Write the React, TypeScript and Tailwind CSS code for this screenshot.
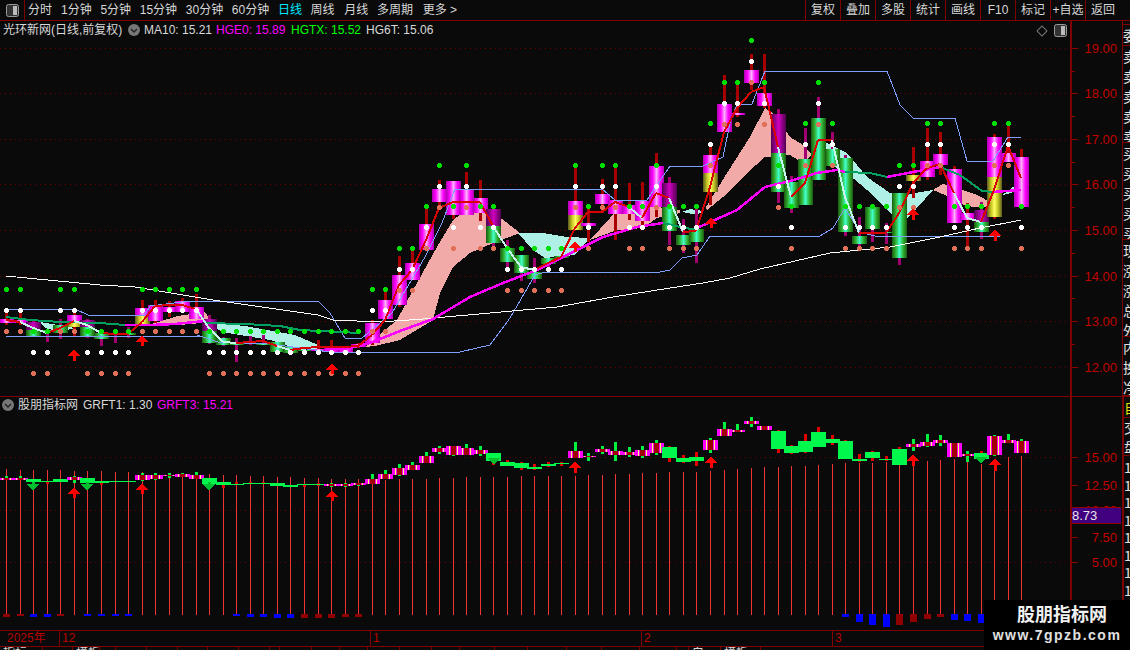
import React from "react";

const barX = (i: number) => Math.round(6.3 + 13.533 * i);

// [wickTop, bodyTop, bodyBottom, wickBottom, kind, split]
type Candle = [number, number, number, number, string, number?];
const candles: Candle[] = [
  [312, 319, 323, 325, "m"], [312, 320, 323, 325, "m"], [320, 322, 336, 337, "p", 330], [329, 330, 332, 342, "g"],
  [319, 325, 333, 339, "g"], [312, 315, 327, 337, "y", 322], [319, 320, 336, 338, "p", 327], [333, 333, 339, 346, "g"],
  [333, 333, 335, 343, "g"], [327, 333, 335, 338, "g"], [300, 308, 324, 325, "y", 316], [300, 305, 321, 323, "m"],
  [301, 307, 312, 317, "m"], [298, 301, 312, 312, "m"], [294, 307, 319, 319, "m"], [315, 319, 343, 344, "p", 331],
  [337, 338, 345, 346, "g"], [338, 343, 345, 362, "g"], [336, 343, 344, 345, "g"], [335, 343, 345, 345, "g"],
  [342, 342, 352, 353, "g"], [347, 347, 353, 354, "g"], [350, 350, 351, 352, "g"], [340, 349, 351, 355, "m"],
  [340, 348, 352, 350, "m"], [348, 348, 352, 352, "m"], [343, 344, 347, 348, "m"], [320, 323, 343, 345, "m"],
  [290, 300, 319, 319, "m"], [256, 275, 305, 307, "m"], [249, 263, 280, 280, "m"], [207, 224, 250, 250, "m"],
  [180, 189, 202, 208, "m"], [181, 181, 215, 219, "m"], [172, 189, 215, 215, "m"], [180, 198, 213, 221, "m"],
  [205, 209, 243, 251, "p", 226], [240, 248, 262, 267, "g"], [255, 255, 273, 281, "g"], [258, 272, 279, 283, "g"],
  [258, 258, 264, 269, "g"], [256, 256, 258, 258, "g"], [163, 201, 230, 230, "y", 215], [206, 223, 226, 242, "m"],
  [179, 194, 204, 213, "m"], [163, 200, 214, 240, "m"], [183, 205, 214, 220, "m"], [182, 201, 221, 227, "m"],
  [153, 166, 207, 217, "m"], [177, 183, 231, 245, "p", 207], [219, 235, 245, 253, "g"], [208, 229, 242, 263, "g"],
  [145, 155, 192, 205, "y", 173], [75, 104, 132, 132, "m"], [85, 113, 115, 117, "m"], [54, 70, 83, 90, "m"],
  [54, 93, 106, 108, "m"], [109, 114, 192, 203, "p", 153], [176, 182, 208, 213, "g"], [128, 159, 205, 205, "g"],
  [97, 118, 180, 180, "g"], [132, 149, 166, 166, "g"], [155, 158, 232, 236, "g"], [217, 236, 244, 251, "g"],
  [207, 207, 229, 242, "g"], [223, 232, 233, 244, "g"], [193, 193, 258, 265, "g"], [147, 175, 181, 198, "y", 175],
  [128, 161, 177, 180, "m"], [132, 154, 165, 175, "m"], [166, 169, 223, 223, "m"], [203, 213, 220, 248, "m"],
  [202, 210, 232, 239, "p", 222], [134, 137, 217, 219, "y", 177], [126, 153, 162, 162, "m"], [149, 157, 207, 207, "m"],
];

// first dot row for each bar: green, then white 21 below, orange 42 below
const dotRows = [
  289, 289, 331, 331, 289, 289, 331, 331, 331, 331, 289, 289, 289, 289, 289, 331, 331, 331, 331, 331, 331, 331, 331, 331, 331, 331, 331,
  289, 289, 248, 248, 206, 165, 206, 165, 206, 206, 248, 248, 248, 248, 248, 165, 206, 165, 165, 206, 206, 165, 206, 206, 206,
  123, 82, 82, 40, 82, 165, 206, 123, 82, 123, 206, 206, 206, 206, 165, 165, 123, 123, 206, 206, 206, 123, 123, 206,
];

const redLine: [number, string][] = [
  [320, "r"], [322, "r"], [328, "p"], [333, "p"], [328, "r"], [321, "r"], [325, "p"], [333, "p"], [334, "r"], [334, "r"], [322, "r"], [306, "r"], [305, "r"], [305, "r"], [309, "r"],
  [328, "p"], [342, "p"], [343, "p"], [342, "r"], [341, "r"], [346, "r"], [350, "p"], [348, "r"], [347, "r"], [347, "r"], [347, "r"], [346, "r"], [335, "r"], [320, "r"], [285, "r"],
  [270, "r"], [240, "r"], [208, "r"], [202, "r"], [202, "r"], [202, "r"], [226, "r"], [248, "p"], [267, "p"], [270, "p"], [263, "r"], [257, "r"], [228, "r"], [212, "r"], [212, "r"],
  [202, "r"], [207, "r"], [218, "p"], [193, "r"], [198, "r"], [232, "p"], [231, "r"], [187, "r"], [132, "r"], [108, "r"], [92, "r"], [87, "r"], [147, "r"], [197, "p"], [183, "r"],
  [140, "r"], [140, "r"], [197, "p"], [233, "p"], [233, "r"], [233, "r"], [213, "r"], [183, "r"], [168, "r"], [164, "r"], [193, "r"], [218, "p"], [222, "p"], [190, "r"], [146, "r"], [178, "r"],
];

const upperBlue = "6,309 75,309 88,315 145,315 150,306 190,301 318,301 330,313 345,338 362,338 392,313 425,257 442,223 455,189 602,189 615,200 647,200 670,166 703,166 723,157 730,123 737,104 752,104 765,71 887,71 900,105 913,118 955,118 967,161 993,161 1008,137 1021,137";
const lowerBlue = "6,337 200,336 218,342 270,344 330,352 460,352 490,345 510,318 535,275 545,272 660,272 670,270 682,258 697,255 710,236 820,236 833,228 845,208 860,232 875,236 1000,236";
const whiteLine = "6,276 100,285 135,287 213,300 318,315 333,320 380,322 423,319 557,307 613,297 670,288 703,283 730,278 760,269 830,253 890,247 940,237 980,228 1021,220";

const maSegments: [string, string][] = [
  ["#00a060", "6,317 30,320 60,322 100,323 125,325"],
  ["#ff00ff", "125,325 150,325 175,324 205,321"],
  ["#00a060", "205,323 245,324 280,326 300,330 360,333"],
  ["#ff00ff", "325,350 350,348 370,343 400,331 433,319 470,297 503,283 537,270 563,257 603,237 637,227 663,223"],
  ["#00a060", "663,223 680,227 697,230"],
  ["#ff00ff", "697,228 737,210 765,187 790,181 817,173 837,170 845,172"],
  ["#00a060", "845,172 870,173 887,177"],
  ["#ff00ff", "887,177 913,172 940,167"],
  ["#00a060", "940,167 960,175 982,191 993,192"],
  ["#ff00ff", "993,192 1021,190"],
];

const pinkBands = [
  "148,325 178,316 205,312 212,322 180,325",
  "365,347 397,320 413,290 437,247 453,220 470,207 497,215 520,233 493,243 470,253 453,267 440,293 433,320 400,340 375,346",
  "590,240 620,207 657,207 680,210 680,213 657,218 643,228 617,230",
  "706,207 727,173 750,137 765,108 773,113 790,137 803,145 812,155 803,163 790,155 765,157 747,173 723,197 707,210",
  "933,190 943,184 957,188 977,195 992,203 987,207 973,207 957,203 950,197",
];
const aquaBands = [
  "40,322 75,328 60,332 45,328",
  "208,322 245,326 295,335 325,348 300,350 270,340 222,332",
  "518,233 543,233 567,237 590,238 575,255 545,258 533,250",
  "682,212 690,209 703,211 697,215",
  "825,142 847,153 867,177 890,193 903,195 933,190 908,218 897,220 887,210 867,190 847,173 827,163",
  "992,203 1013,187 1021,186 1021,190 1000,196",
];

const mainArrows: [number, number, number][] = [
  [74, 349, 361], [142, 335, 346], [332, 363, 374], [575, 241, 252], [711, 217, 228], [913, 208, 220], [995, 229, 241],
];

// sub chart, y values read off at 3x from y=395: [bodyTop, bodyBottom, wickTop, wickBottom, up?]
type SubBar = [number, number, number, number, number];
const subBars: SubBar[] = [
  [249, 255, 243, 256, 1], [250, 255, 243, 256, 1], [252, 261, 252, 261, 0], [258, 261, 258, 267, 0], [252, 261, 252, 261, 0], [246, 255, 243, 265, 1], [249, 264, 249, 264, 0], [258, 264, 258, 270, 0],
  [258, 262, 258, 262, 0], [258, 261, 258, 261, 0], [240, 255, 233, 257, 1], [240, 252, 234, 255, 1], [240, 243, 235, 249, 1], [238, 245, 233, 246, 1], [240, 252, 232, 253, 1], [249, 267, 249, 267, 0],
  [261, 270, 261, 279, 0], [266, 269, 261, 269, 0], [264, 267, 261, 267, 0], [264, 267, 261, 267, 0], [264, 273, 264, 273, 0], [270, 276, 270, 276, 0], [267, 270, 267, 276, 0], [267, 270, 263, 273, 0],
  [267, 273, 263, 276, 1], [267, 273, 263, 276, 1], [264, 270, 263, 273, 1], [252, 267, 237, 267, 1], [237, 252, 225, 252, 1], [219, 240, 207, 243, 1], [210, 225, 201, 225, 1], [183, 204, 171, 204, 1],
  [159, 171, 153, 177, 1], [153, 180, 153, 183, 1], [159, 180, 147, 180, 1], [165, 177, 153, 183, 1], [174, 198, 174, 210, 0], [201, 213, 195, 213, 0], [204, 219, 201, 225, 0], [216, 222, 207, 225, 0],
  [207, 213, 201, 216, 0], [204, 207, 201, 213, 0], [168, 189, 141, 189, 1], [183, 186, 174, 198, 1], [162, 171, 153, 177, 1], [168, 180, 141, 198, 1], [171, 180, 156, 186, 1], [165, 183, 153, 189, 1],
  [144, 174, 135, 180, 1], [156, 189, 153, 201, 0], [189, 201, 180, 204, 0], [186, 198, 171, 213, 0], [135, 165, 129, 174, 1], [102, 123, 81, 123, 1], [105, 111, 87, 111, 1], [78, 87, 66, 96, 1],
  [93, 105, 93, 105, 1], [108, 162, 105, 174, 0], [153, 174, 150, 177, 0], [138, 171, 117, 174, 0], [111, 156, 96, 156, 0], [132, 144, 120, 150, 0], [138, 192, 135, 192, 0], [192, 198, 177, 201, 0],
  [171, 189, 168, 198, 0], [192, 195, 183, 198, 0], [162, 210, 156, 210, 0], [147, 156, 132, 168, 1], [141, 153, 117, 156, 1], [135, 144, 120, 153, 1], [144, 186, 144, 186, 1], [177, 183, 168, 201, 1],
  [174, 192, 168, 192, 0], [123, 180, 120, 183, 1], [135, 144, 117, 144, 1], [138, 174, 132, 174, 1],
];
const lineTops = [
  222, 225, 225, 225, 225, 228, 228, 228, 231, 231, 231, 235, 238, 240, 237, 238, 240, 241, 243, 243, 246, 246, 250, 250, 252, 252, 252, 252,
  255, 252, 252, 252, 249, 249, 246, 246, 246, 246, 243, 243, 243, 243, 243, 240, 240, 237, 237, 234, 234, 231, 231, 231, 228, 225, 222, 219,
  216, 216, 213, 213, 210, 207, 204, 204, 204, 201, 210, 210, 198, 195, 192, 201, 207, 210, 186, 183,
];
// [bar, depth in px, colour]
const footBars: [number, number, string][] = [
  [0, 3, "#900000"], [1, 2, "#900000"], [2, 3, "#0000ff"], [3, 3, "#0000ff"], [4, 2, "#900000"], [6, 2, "#0000ff"], [7, 2, "#0000ff"], [8, 2, "#0000ff"], [9, 2, "#0000ff"],
  [17, 2, "#0000ff"], [18, 3, "#0000ff"], [19, 3, "#0000ff"], [20, 4, "#0000ff"], [21, 4, "#0000ff"], [22, 4, "#900000"], [23, 4, "#900000"], [24, 4, "#900000"], [25, 3, "#900000"], [26, 3, "#900000"],
  [62, 3, "#0000ff"], [63, 8, "#0000ff"], [64, 11, "#0000ff"], [65, 13, "#0000ff"], [66, 11, "#900000"], [67, 8, "#900000"], [68, 5, "#900000"], [69, 3, "#900000"], [70, 6, "#0000ff"], [71, 7, "#0000ff"], [72, 9, "#0000ff"],
];
const subUp: [number, number, number][] = [
  [74, 487, 498], [142, 483, 494], [332, 490, 501], [575, 461, 473], [711, 456, 468], [913, 454, 466], [995, 458, 471],
];
const subDown: [number, number, number][] = [
  [33, 482, 491], [87, 482, 491], [209, 482, 491], [494, 461, 465], [981, 459, 464],
];

const zy = (z: number) => Math.round(395 + z / 3);

const UpArrow = ({ x, top, bottom }: { x: number; top: number; bottom: number }) => (
  <g fill="#ff0000">
    <polygon points={`${x - 6},${top + 7} ${x},${top} ${x + 6},${top + 7}`} />
    <rect x={x - 1} y={top + 6} width={3} height={bottom - top - 6} />
  </g>
);

// 5px blob with the corners knocked off
const Dot = ({ x, y, fill }: { x: number; y: number; fill: string }) => (
  <g fill={fill}>
    <rect x={x - 2} y={y - 1} width={5} height={3} />
    <rect x={x - 1} y={y - 2} width={3} height={5} />
  </g>
);

const MainChart = () => {
  const grid = [48, 93, 139, 184, 230, 276, 321, 367];
  return (
    <svg width={1070} height={375} viewBox="0 21 1070 375" className="block" shapeRendering="crispEdges">
      <defs>
        <linearGradient id="mag">
          <stop offset="0" stopColor="#b000b0" />
          <stop offset="0.25" stopColor="#ff00ff" />
          <stop offset="0.5" stopColor="#ffb0ff" />
          <stop offset="0.75" stopColor="#ff00ff" />
          <stop offset="1" stopColor="#b000b0" />
        </linearGradient>
        <linearGradient id="grn">
          <stop offset="0" stopColor="#1a5a10" />
          <stop offset="0.25" stopColor="#30b030" />
          <stop offset="0.5" stopColor="#40ffc8" />
          <stop offset="0.75" stopColor="#30b030" />
          <stop offset="1" stopColor="#1a5a10" />
        </linearGradient>
        <linearGradient id="yel">
          <stop offset="0" stopColor="#5a5a20" />
          <stop offset="0.25" stopColor="#c0c020" />
          <stop offset="0.5" stopColor="#ffff60" />
          <stop offset="0.75" stopColor="#c0c020" />
          <stop offset="1" stopColor="#5a5a20" />
        </linearGradient>
        <linearGradient id="pur">
          <stop offset="0" stopColor="#500050" />
          <stop offset="0.5" stopColor="#d000c0" />
          <stop offset="1" stopColor="#500050" />
        </linearGradient>
      </defs>
      {grid.map((y) => (
        <line key={y} x1={0} x2={1070} y1={y} y2={y} stroke="#700000" strokeDasharray="1 4" />
      ))}
      {pinkBands.map((p) => <polygon key={p} points={p} fill="#f2aaa8" />)}
      {aquaBands.map((p) => <polygon key={p} points={p} fill="#aeefe6" />)}
      {candles.map(([wt, bt, bb, wb, kind, split], i) => {
        const x = barX(i);
        const green = kind === "g" || kind === "p";
        const s = split ?? bt;
        const top = kind === "y" ? "url(#mag)" : kind === "p" ? "url(#pur)" : "";
        const bottom = kind === "m" ? "url(#mag)" : kind === "y" ? "url(#yel)" : "url(#grn)";
        return (
          <g key={i}>
            <rect x={x - 1} y={wt} width={3} height={wb - wt} fill={green ? "#a00070" : "#a80000"} />
            {s > bt && <rect x={x - 7} y={bt} width={15} height={s - bt} fill={top} />}
            <rect x={x - 7} y={s} width={15} height={Math.max(bb - s, 1)} fill={bottom} />
          </g>
        );
      })}
      <polyline points={upperBlue} fill="none" stroke="#7f9fff" />
      <polyline points={lowerBlue} fill="none" stroke="#7f9fff" />
      <polyline points={whiteLine} fill="none" stroke="#ffffff" />
      {maSegments.map(([c, p]) => (
        <polyline key={p} points={p} fill="none" stroke={c} strokeWidth={c === "#ff00ff" ? 2.5 : 2} />
      ))}
      {redLine.slice(1).map(([y, c], i) => (
        <line key={i} x1={barX(i)} y1={redLine[i][0]} x2={barX(i + 1)} y2={y} stroke={c === "r" ? "#d80000" : "#c8f4ee"} strokeWidth={2} />
      ))}
      {dotRows.map((y, i) => (
        <g key={i}>
          <Dot x={barX(i)} y={y} fill="#00e000" />
          <Dot x={barX(i)} y={y + 21} fill="#ffffff" />
          <Dot x={barX(i)} y={y + 42} fill="#e07058" />
        </g>
      ))}
      {mainArrows.map(([x, t, b]) => <UpArrow key={x} x={x} top={t} bottom={b} />)}
    </svg>
  );
};

const SubChart = () => (
  <svg width={1070} height={233} viewBox="0 397 1070 233" className="block" shapeRendering="crispEdges">
    <defs>
      <linearGradient id="stripe">
        <stop offset="0" stopColor="#ff00ff" />
        <stop offset="0.2" stopColor="#ff00ff" />
        <stop offset="0.2" stopColor="#ffff70" />
        <stop offset="0.27" stopColor="#ffff70" />
        <stop offset="0.27" stopColor="#ff00ff" />
        <stop offset="0.34" stopColor="#ff00ff" />
        <stop offset="0.34" stopColor="#a00000" />
        <stop offset="0.66" stopColor="#a00000" />
        <stop offset="0.66" stopColor="#ff00ff" />
        <stop offset="0.73" stopColor="#ff00ff" />
        <stop offset="0.73" stopColor="#ffff70" />
        <stop offset="0.8" stopColor="#ffff70" />
        <stop offset="0.8" stopColor="#ff00ff" />
        <stop offset="1" stopColor="#ff00ff" />
      </linearGradient>
    </defs>
    {[457, 510, 562].map((y) => (
      <line key={y} x1={0} x2={1070} y1={y} y2={y} stroke="#600000" strokeDasharray="1 4" />
    ))}
    {lineTops.map((z, i) => (
      <rect key={i} x={barX(i)} y={zy(z)} width={1} height={615 - zy(z)} fill="#f03434" />
    ))}
    {subBars.map(([bt, bb, wt, wb, up], i) => {
      const x = barX(i);
      return (
        <g key={i}>
          <rect x={x - 1} y={zy(wt)} width={3} height={zy(wb) - zy(wt)} fill={up ? "#00f040" : "#e00000"} />
          <rect x={x - 7} y={zy(bt)} width={15} height={Math.max(zy(bb) - zy(bt), 1)} fill={up ? "url(#stripe)" : "#00f84c"} />
        </g>
      );
    })}
    {footBars.map(([i, d, c]) => (
      <rect key={i} x={barX(i) - 3} y={614} width={7} height={d} fill={c} />
    ))}
    {subDown.map(([x, t, b]) => (
      <g key={x} fill="#00c030">
        <polygon points={`${x - 6},${b - 7} ${x},${b} ${x + 6},${b - 7}`} />
        <rect x={x - 1} y={t} width={3} height={Math.max(b - t - 6, 0)} />
      </g>
    ))}
    {subUp.map(([x, t, b]) => <UpArrow key={x} x={x} top={t} bottom={b} />)}
  </svg>
);

const Axis = ({ top, height, labels, minor }: { top: number; height: number; labels: [number, string][]; minor: number[] }) => (
  <svg width={50} height={height} viewBox={`0 ${top} 50 ${height}`} className="block" shapeRendering="crispEdges">
    {labels.map(([y, t]) => (
      <g key={t}>
        <line x1={0} x2={6} y1={y} y2={y} stroke="#900000" />
        <text x={45} y={y + 5} textAnchor="end" fontSize={13} fill="#c00000" shapeRendering="auto">{t}</text>
      </g>
    ))}
    {minor.map((y) => <line key={y} x1={0} x2={3} y1={y} y2={y} stroke="#900000" />)}
  </svg>
);

const PanelIcon = () => (
  <svg width={13} height={13} viewBox="0 0 13 13">
    <rect x={0.5} y={0.5} width={12} height={12} rx={2} fill="#333" stroke="#999" />
    <rect x={7} y={2} width={4} height={9} fill="#bbb" />
  </svg>
);

const Chevron = () => (
  <svg width={12} height={12} viewBox="0 0 12 12">
    <circle cx={6} cy={6} r={6} fill="#777" />
    <path d="M3 5l3 3 3-3" fill="none" stroke="#222" strokeWidth={1.4} />
  </svg>
);

const periods = ["1分钟", "5分钟", "15分钟", "30分钟", "60分钟"];
const buttons = ["复权", "叠加", "多股", "统计", "画线", "F10", "标记", "+自选", "返回"];
const tabs: [string, number][] = [
  ["指标", 43], ["", 30], ["模板", 27], ["", 16], ["", 31], ["", 31], ["", 30], ["", 31], ["", 31], ["", 10], ["", 32], ["", 28], ["", 28], ["", 32], ["", 32], ["", 28], ["", 35], ["", 33], ["", 39], ["", 35], ["", 38], ["", 37], ["", 12], ["白", 32], ["模板", 40],
];

const StripCell = ({ rows, className }: { rows: string[]; className: string }) => (
  <div className={`flex flex-col items-start border-b border-[#800000] ${className}`}>
    {rows.map((r, i) => (
      <div key={i} className="h-[20px] shrink-0 text-[14px] leading-[20px] text-[#e0e0e0]">{r}</div>
    ))}
  </div>
);

export default function App() {
  return (
    <div className="relative flex h-[650px] w-[1130px] flex-col overflow-hidden bg-[#0a0a0a] text-[12px] text-[#d8d8d8] [font-family:'Liberation_Sans','Noto_Sans_CJK_SC',sans-serif]">
      {/* toolbar */}
      <div className="flex h-[21px] shrink-0 items-center border-b border-[#800000]">
        <div className="flex h-full w-[25px] items-center justify-center border-r border-[#800000]">
          <PanelIcon />
        </div>
        <span className="ml-[3px]">分时</span>
        <div className="ml-[9px] flex gap-[8.7px]">
          {periods.map((p) => <span key={p}>{p}</span>)}
          <span className="text-[#00e8ff]">日线</span>
          <span>周线</span>
          <span className="ml-[1px]">月线</span>
          <span>多周期</span>
          <span className="ml-[1px]">更多 &gt;</span>
        </div>
        <div className="ml-auto mr-[10px] flex h-full">
          {buttons.map((b) => (
            <div key={b} className="flex h-full w-[35px] items-center justify-center border-l border-[#800000] whitespace-nowrap">{b}</div>
          ))}
        </div>
      </div>

      {/* main panel */}
      <div className="flex h-[375px] shrink-0">
        <div className="relative w-[1070px]">
          <MainChart />
          <div className="absolute left-[3px] top-0 flex h-[17px] items-center whitespace-nowrap">
            <span className="w-[125px]">光环新网(日线,前复权)</span>
            <Chevron />
            <span className="ml-[4px] w-[72px]">MA10: 15.21</span>
            <span className="w-[75px] text-[#ff00ff]">HGE0: 15.89</span>
            <span className="w-[75px] text-[#00ff00]">HGTX: 15.52</span>
            <span>HG6T: 15.06</span>
          </div>
          <div className="absolute right-[3px] top-[3px] flex items-center gap-[8px]">
            <span className="size-[8px] rotate-45 border border-[#777]" />
            <PanelIcon />
          </div>
        </div>
        <div className="w-[52px] border-l-2 border-[#800000]">
          <Axis
            top={21}
            height={375}
            labels={[[48, "19.00"], [93, "18.00"], [139, "17.00"], [184, "16.00"], [230, "15.00"], [276, "14.00"], [321, "13.00"], [367, "12.00"]]}
            minor={[71, 116, 162, 207, 253, 298, 344]}
          />
        </div>
        <div className="w-[8px] overflow-hidden border-l border-[#800000] [font-family:'Noto_Sans_CJK_SC',sans-serif]">
          <div className="h-[4px] border-b border-[#800000]" />
          <StripCell rows={["委"]} className="h-[21px] overflow-hidden" />
          <StripCell rows={["卖", "卖", "卖", "卖", "卖"]} className="h-[97px] overflow-hidden" />
          <StripCell rows={["买", "买", "买", "买", "买"]} className="h-[97px] overflow-hidden" />
          <StripCell rows={["现", "涨", "涨", "总", "外"]} className="h-[97px] overflow-hidden" />
          <StripCell rows={["内", "换", "净"]} className="h-[59px] overflow-hidden" />
        </div>
      </div>

      {/* indicator panel */}
      <div className="flex h-[234px] shrink-0 border-t border-[#800000]">
        <div className="relative w-[1070px]">
          <SubChart />
          <div className="absolute left-[2px] top-0 flex h-[16px] items-center whitespace-nowrap">
            <Chevron />
            <span className="ml-[4px] w-[65px]">股朋指标网</span>
            <span className="w-[74px]">GRFT1: 1.30</span>
            <span className="text-[#ff00ff]">GRFT3: 15.21</span>
          </div>
        </div>
        <div className="relative w-[52px] border-l-2 border-[#800000]">
          <Axis
            top={397}
            height={233}
            labels={[[457, "15.00"], [485, "12.50"], [510, "10.00"], [537, "7.50"], [562, "5.00"]]}
            minor={[]}
          />
          <div className="absolute left-0 top-[110px] flex h-[17px] w-[49px] items-center border-y border-[#900000] bg-[#400080] text-[13px] text-[#e8e8e8]">8.73</div>
        </div>
        <div className="flex w-[8px] flex-col items-start overflow-hidden border-l-2 border-[#800000] text-[14px] leading-[17.5px] [font-family:'Noto_Sans_CJK_SC',sans-serif]">
          <div className="h-[21px] w-full shrink-0 border-b border-[#800000] leading-[21px] text-[#e0e000]">自</div>
          <div className="h-[38px] w-full shrink-0 border-b border-[#800000] text-[#e0e0e0]">
            <div className="leading-[19px]">交</div>
            <div className="leading-[19px]">盘</div>
          </div>
          <div className="mt-[3px] text-[#e0e0e0]">
            {[0, 1, 2, 3, 4, 5, 6, 7, 8].map((i) => <div key={i}>1</div>)}
          </div>
        </div>
      </div>

      {/* date axis */}
      <div className="flex h-[17px] w-[1070px] shrink-0 items-start border-y border-[#800000] leading-[15px] text-[#b80000]">
        <div className="h-full w-[59px] pl-[7px]">2025年</div>
        <div className="h-full w-[311px] border-l border-[#800000] pl-[2px]">12</div>
        <div className="h-full w-[271px] border-l border-[#800000] pl-[2px]">1</div>
        <div className="h-full w-[191px] border-l border-[#800000] pl-[2px]">2</div>
        <div className="h-full flex-1 border-l border-[#800000] pl-[2px]">3</div>
      </div>

      {/* tab row, only the top of it fits in the window */}
      <div className="flex h-[3px] overflow-hidden leading-[12px]">
        {tabs.map(([t, w], i) => (
          <div key={i} style={{ width: w }} className="shrink-0 whitespace-nowrap border-r border-[#800000] pl-[3px]">{t}</div>
        ))}
      </div>

      {/* watermark */}
      <div className="absolute bottom-0 right-0 flex h-[50px] w-[146px] flex-col items-center bg-black pt-[4px] font-bold">
        <span className="pl-[10px] text-[18px] leading-[22px] text-[#f0f0f0]">股朋指标网</span>
        <span className="text-[14px] leading-[18px] tracking-[1.5px] text-[#e0e0e0]">www.7gpzb.com</span>
      </div>
    </div>
  );
}
